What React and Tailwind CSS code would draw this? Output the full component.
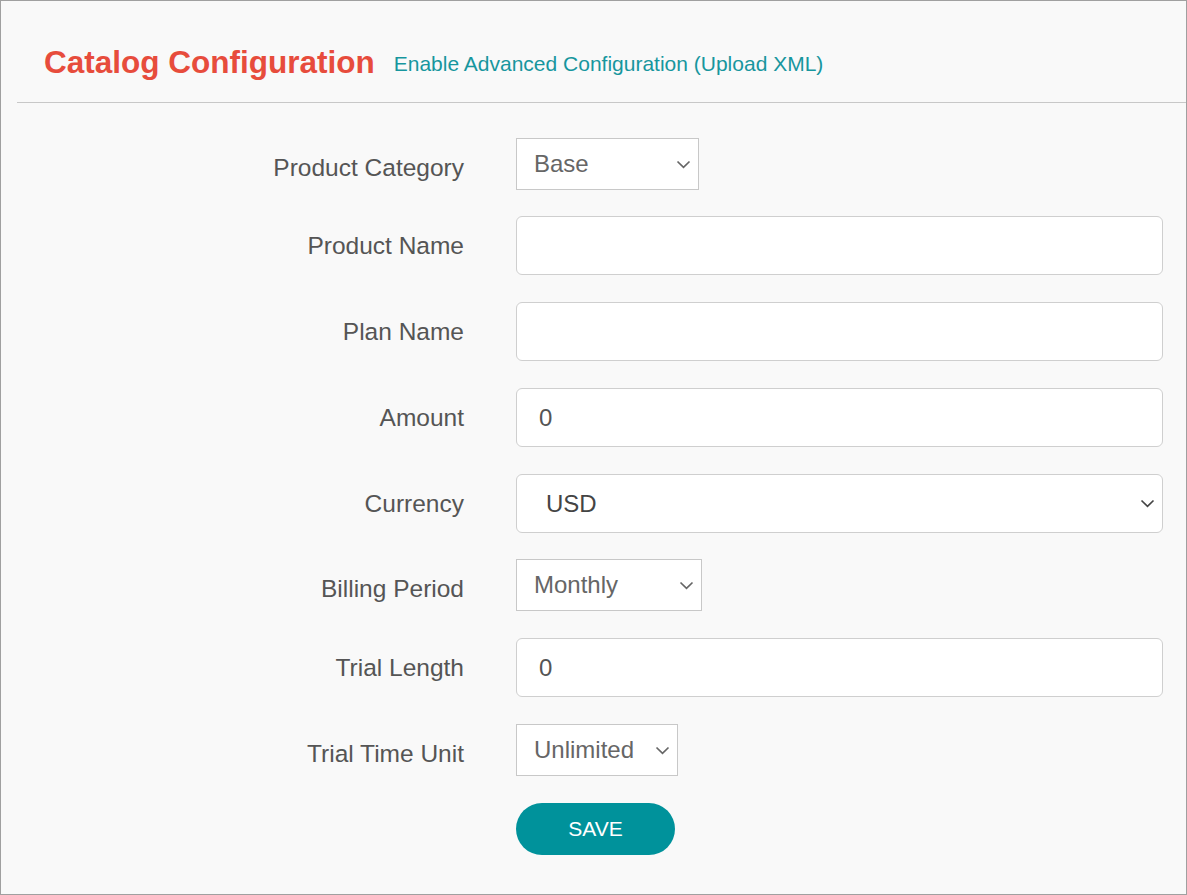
import { useState } from 'react';

const font = { fontFamily: '"Liberation Sans", Arial, sans-serif' };

function Chevron({ className = '' }) {
  return (
    <svg width="15" height="9" viewBox="0 0 15 9" className={className} fill="none">
      <path d="M1.5 1.5 L7.5 7.3 L13.5 1.5" stroke="currentColor" strokeWidth="1.7" />
    </svg>
  );
}

function Row({ label, children, gap = 'mb-[27px]' }) {
  return (
    <div className={`flex items-start ${gap}`}>
      <div className="w-[463px] shrink-0 text-right pt-[16px] text-[24.5px] leading-[28px] text-[#555]">{label}</div>
      <div className="ml-[52px] flex-1 mr-[23px]">{children}</div>
    </div>
  );
}

function SmallSelect({ value, width }) {
  return (
    <div
      className="h-[52px] bg-white border border-[#c8c8c8] flex items-center justify-between pl-[17px] pr-[7px] text-[24px] text-[#666]"
      style={{ width }}
    >
      <span>{value}</span>
      <Chevron className="text-[#666]" />
    </div>
  );
}

function TextInput({ value }) {
  const [v, setV] = useState(value);
  return (
    <input
      value={v}
      onChange={(e) => setV(e.target.value)}
      className="w-full h-[59px] bg-white border border-[#cfcfcf] rounded-[6px] px-[22px] text-[24px] text-[#555] outline-none"
    />
  );
}

export default function App() {
  return (
    <div style={font} className="w-[1187px] h-[895px] bg-[#f9f9f9] border border-[#a0a0a0] overflow-hidden">
      <div className="flex items-baseline pl-[43px] pt-[42px] h-[101px]">
        <h1 className="text-[31.5px] leading-[38px] font-bold text-[#e74c3c]">Catalog Configuration</h1>
        <a className="ml-[19px] text-[21px] text-[#17969e] relative -top-[2px]">Enable Advanced Configuration (Upload XML)</a>
      </div>
      <div className="ml-[16px] h-px bg-[#c8c8c8]" />

      <div className="pt-[35px]">
        <Row label="Product Category" gap="mb-[26px]">
          <SmallSelect value="Base" width={183} />
        </Row>
        <Row label="Product Name">
          <TextInput value="" />
        </Row>
        <Row label="Plan Name">
          <TextInput value="" />
        </Row>
        <Row label="Amount">
          <TextInput value="0" />
        </Row>
        <Row label="Currency" gap="mb-[26px]">
          <div className="w-full h-[59px] bg-white border border-[#cfcfcf] rounded-[6px] flex items-center justify-between pl-[29px] pr-[7px] text-[24px] text-[#444]">
            <span>USD</span>
            <Chevron className="text-[#444]" />
          </div>
        </Row>
        <Row label="Billing Period">
          <SmallSelect value="Monthly" width={186} />
        </Row>
        <Row label="Trial Length">
          <TextInput value="0" />
        </Row>
        <Row label="Trial Time Unit">
          <SmallSelect value="Unlimited" width={162} />
        </Row>
        <div className="ml-[515px]">
          <button className="w-[159px] h-[52px] rounded-full bg-[#00929b] text-white text-[21px]">SAVE</button>
        </div>
      </div>
    </div>
  );
}
